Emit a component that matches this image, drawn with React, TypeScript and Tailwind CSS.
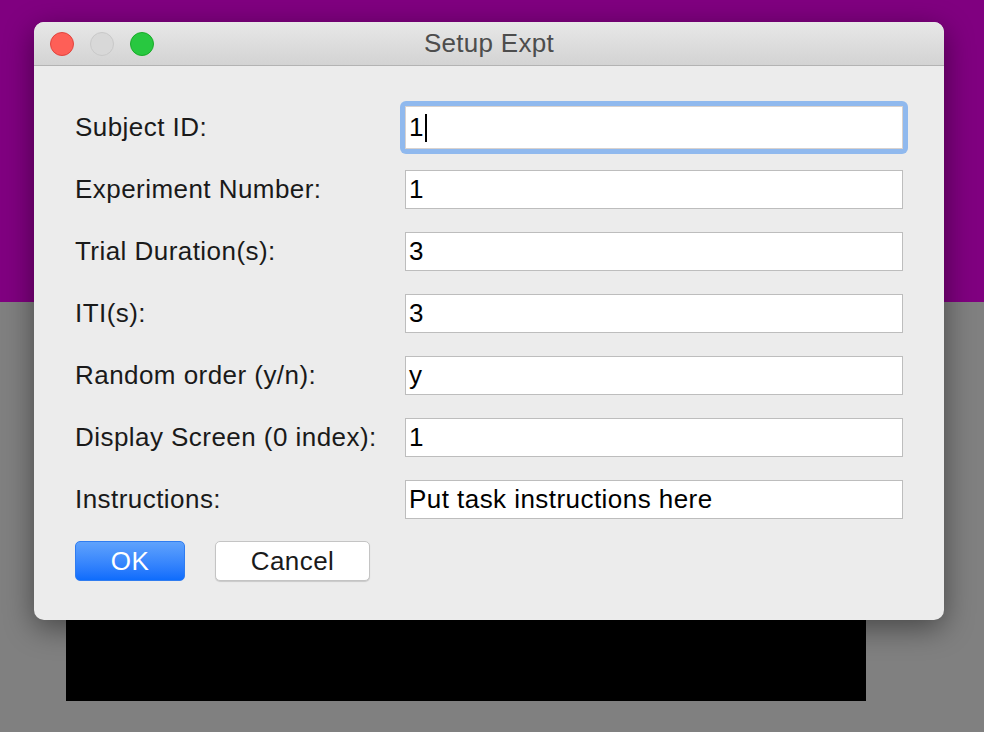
const fields = [
  { label: 'Experiment Number:', value: '1' },
  { label: 'Trial Duration(s):', value: '3' },
  { label: 'ITI(s):', value: '3' },
  { label: 'Random order (y/n):', value: 'y' },
  { label: 'Display Screen (0 index):', value: '1' },
  { label: 'Instructions:', value: 'Put task instructions here' },
]

function TrafficLights() {
  return (
    <div className="flex items-center gap-4">
      <span className="h-6 w-6 rounded-full border border-[#e0443e] bg-[#fe5f57]" />
      <span className="h-6 w-6 rounded-full border border-[#c8c8c8] bg-[#d8d8d8]" />
      <span className="h-6 w-6 rounded-full border border-[#1aab29] bg-[#28c840]" />
    </div>
  )
}

export default function App() {
  return (
    <div className="relative h-[732px] w-[984px] overflow-hidden font-['Liberation_Sans',Arial,sans-serif] tracking-[0.45px]">
      <div className="flex h-full flex-col">
        <div className="h-[302px] bg-[#800080]" />
        <div className="flex-1 bg-[#808080] pl-[66px] pt-[298px]">
          <div className="h-[101px] w-[800px] bg-black" />
        </div>
      </div>

      <div className="absolute left-[34px] top-[22px] flex h-[598px] w-[910px] flex-col overflow-hidden rounded-[10px] bg-[#ececec] shadow-[0_8px_30px_rgba(0,0,0,0.45)]">
        <div className="relative flex h-[44px] items-center border-b border-[#b3b3b3] bg-gradient-to-b from-[#e8e8e8] to-[#d3d3d3] pl-4">
          <TrafficLights />
          <div className="absolute inset-0 flex items-center justify-center text-[26px] tracking-[0.3px] text-[#4d4d4d]">
            Setup Expt
          </div>
        </div>

        <div className="flex flex-col pl-[41px] pt-[35px]">
          <div className="flex h-[53px] items-center">
            <div className="w-[325px] text-[26px] text-[#1a1a1a]">Subject ID:</div>
            <div className="flex h-[53px] w-[508px] items-center rounded-[6px] bg-[#90b9ee] p-[5px]">
              <div className="flex h-full w-full items-center border border-[#d8d2cf] bg-white pl-[3px] text-[26px] text-black">
                1<span className="ml-[1px] h-[28px] w-[2px] bg-black" />
              </div>
            </div>
          </div>

          <div className="mt-[16px] flex flex-col gap-[23px]">
            {fields.map((f) => (
              <div key={f.label} className="flex h-[39px] items-center">
                <div className="w-[330px] text-[26px] text-[#1a1a1a]">{f.label}</div>
                <div className="flex h-[39px] w-[498px] items-center border border-[#bdbdbd] bg-white pl-[3px] text-[26px] text-black">
                  {f.value}
                </div>
              </div>
            ))}
          </div>

          <div className="mt-[22px] flex gap-[30px]">
            <button className="h-[40px] w-[110px] rounded-[5px] border border-[#2f7cf0] bg-gradient-to-b from-[#5fa2fc] to-[#0d6cfc] text-[26px] text-white">
              OK
            </button>
            <button className="h-[40px] w-[155px] rounded-[5px] border border-[#c4c4c4] bg-white text-[26px] text-[#1a1a1a] shadow-[0_1px_1px_rgba(0,0,0,0.15)]">
              Cancel
            </button>
          </div>
        </div>
      </div>
    </div>
  )
}
